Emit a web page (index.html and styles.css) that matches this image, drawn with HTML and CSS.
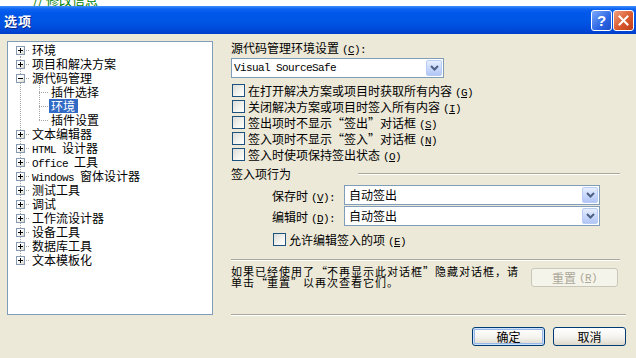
FILE: index.html
```html
<!DOCTYPE html>
<html lang="zh-CN">
<head>
<meta charset="utf-8">
<title>选项</title>
<link rel="stylesheet" href="styles.css">
</head>
<body>
<div class="topstrip"><span>// 修改信息</span></div>
<div class="titlebar">
  <span class="title">选项</span>
  <div class="tbtns">
    <span class="tbtn help">?</span>
    <span class="tbtn close"><svg width="11" height="11" viewBox="0 0 11 11"><path d="M1.5 1.5l8 8M9.5 1.5l-8 8" stroke="#fff" stroke-width="2" stroke-linecap="square"/></svg></span>
  </div>
</div>
<div class="dialog">
  <div class="main">
    <div class="tree">
      <div class="row"><span class="g g-first"><span class="pb"></span></span><span class="lbl">环境</span></div>
      <div class="row"><span class="g g-mid"><span class="pb"></span></span><span class="lbl">项目和解决方案</span></div>
      <div class="row"><span class="g g-mid"><span class="pb minus"></span></span><span class="lbl">源代码管理</span></div>
      <div class="row"><span class="g g-pass"></span><span class="g g-cmid"></span><span class="lbl">插件选择</span></div>
      <div class="row"><span class="g g-pass"></span><span class="g g-cmid"></span><span class="lbl sel">环境</span></div>
      <div class="row"><span class="g g-pass"></span><span class="g g-clast"></span><span class="lbl">插件设置</span></div>
      <div class="row"><span class="g g-mid"><span class="pb"></span></span><span class="lbl">文本编辑器</span></div>
      <div class="row"><span class="g g-mid"><span class="pb"></span></span><span class="lbl"><span class="m">HTML </span>设计器</span></div>
      <div class="row"><span class="g g-mid"><span class="pb"></span></span><span class="lbl"><span class="m">Office </span>工具</span></div>
      <div class="row"><span class="g g-mid"><span class="pb"></span></span><span class="lbl"><span class="m">Windows </span>窗体设计器</span></div>
      <div class="row"><span class="g g-mid"><span class="pb"></span></span><span class="lbl">测试工具</span></div>
      <div class="row"><span class="g g-mid"><span class="pb"></span></span><span class="lbl">调试</span></div>
      <div class="row"><span class="g g-mid"><span class="pb"></span></span><span class="lbl">工作流设计器</span></div>
      <div class="row"><span class="g g-mid"><span class="pb"></span></span><span class="lbl">设备工具</span></div>
      <div class="row"><span class="g g-mid"><span class="pb"></span></span><span class="lbl">数据库工具</span></div>
      <div class="row"><span class="g g-last"><span class="pb"></span></span><span class="lbl">文本模板化</span></div>
    </div>
    <div class="settings">
      <div class="lab1">源代码管理环境设置<span class="acc">(<u>C</u>):</span></div>
      <div class="combo wide"><span class="m">Visual SourceSafe</span><span class="arrow"><svg width="9" height="6" viewBox="0 0 9 6"><path d="M1 1l3.5 3.5L8 1" fill="none" stroke="#4D6185" stroke-width="2"/></svg></span></div>
      <div class="checks">
        <div class="chk"><span class="box"></span><span>在打开解决方案或项目时获取所有内容<span class="acc">(<u>G</u>)</span></span></div>
        <div class="chk"><span class="box"></span><span>关闭解决方案或项目时签入所有内容<span class="acc">(<u>I</u>)</span></span></div>
        <div class="chk"><span class="box"></span><span>签出项时不显示<span class="qo">“</span>签出<span class="qc">”</span>对话框<span class="acc">(<u>S</u>)</span></span></div>
        <div class="chk"><span class="box"></span><span>签入项时不显示<span class="qo">“</span>签入<span class="qc">”</span>对话框<span class="acc">(<u>N</u>)</span></span></div>
        <div class="chk"><span class="box"></span><span>签入时使项保持签出状态<span class="acc">(<u>O</u>)</span></span></div>
      </div>
      <div class="group"><span>签入项行为</span><span class="gline"></span></div>
      <div class="field first"><span class="flabel">保存时<span class="acc">(<u>V</u>):</span></span><div class="combo narrow"><span class="ctext">自动签出</span><span class="arrow"><svg width="9" height="6" viewBox="0 0 9 6"><path d="M1 1l3.5 3.5L8 1" fill="none" stroke="#4D6185" stroke-width="2"/></svg></span></div></div>
      <div class="field"><span class="flabel">编辑时<span class="acc">(<u>D</u>):</span></span><div class="combo narrow"><span class="ctext">自动签出</span><span class="arrow"><svg width="9" height="6" viewBox="0 0 9 6"><path d="M1 1l3.5 3.5L8 1" fill="none" stroke="#4D6185" stroke-width="2"/></svg></span></div></div>
      <div class="chk indent"><span class="box"></span><span>允许编辑签入的项<span class="acc">(<u>E</u>)</span></span></div>
      <div class="sep sep1"></div>
      <div class="info">
        <p class="infotext">如果已经使用了<span class="qo">“</span>不再显示此对话框<span class="qc">”</span>隐藏对话框，请<br>单击<span class="qo">“</span>重置<span class="qc">”</span>以再次查看它们。</p>
        <span class="btn reset">重置<span class="acc">(<u>R</u>)</span></span>
      </div>
      <div class="sep sep2"></div>
    </div>
  </div>
  <div class="footer">
    <span class="btn def">确定</span>
    <span class="btn">取消</span>
  </div>
</div>
</body>
</html>
```

FILE: styles.css
```css
* { box-sizing: border-box; }
html, body { margin: 0; padding: 0; }
body {
  width: 636px;
  height: 358px;
  overflow: hidden;
  background: #ECE9D8;
  font-family: "Noto Sans CJK SC", "Noto Sans", sans-serif;
  font-size: 12px;
  color: #000;
}
u { text-decoration: underline; }

.topstrip {
  height: 6px;
  background: #fff;
  overflow: hidden;
  padding-left: 33px;
}
.topstrip span {
  display: block;
  color: #008000;
  font-size: 13px;
  line-height: 13px;
  margin-top: -7px;
}

.titlebar {
  height: 28px;
  display: flex;
  align-items: center;
  justify-content: space-between;
  padding: 0 2px 0 4px;
  background: linear-gradient(to bottom, #3D8EF9 0, #0D63F2 3px, #0058EA 7px, #0055E4 16px, #004ADA 23px, #003FC9 28px);
}
.title {
  color: #fff;
  font-weight: bold;
  font-size: 13px;
  letter-spacing: 1px;
  text-shadow: 1px 1px 0 #0A2A8A;
}
.tbtns { display: flex; gap: 1px; }
.tbtn {
  width: 21px;
  height: 21px;
  border: 1px solid #fff;
  border-radius: 3px;
  display: flex;
  align-items: center;
  justify-content: center;
}
.help {
  background: linear-gradient(135deg, #7DAAFB, #2B66E4 60%, #1E50C8);
  color: #fff;
  font-family: "Liberation Sans", sans-serif;
  font-weight: bold;
  font-size: 15px;
}
.close {
  background: linear-gradient(135deg, #F0A07C, #D9582E 55%, #C0401C);
}

.dialog { padding: 7px 10px 0 7px; }
.main { display: flex; gap: 18px; }

.tree {
  width: 206px;
  height: 274px;
  flex: none;
  background: #fff;
  border: 1px solid #7F9DB9;
  padding: 1px 0 0 3px;
}
.row { display: flex; height: 14px; }
.g {
  width: 19px;
  height: 14px;
  flex: none;
  padding: 3px 0 0 5px;
}
.g-first {
  background:
    repeating-linear-gradient(to right, #A5A5A5 0 1px, transparent 1px 2px) 9px 7px / 10px 1px no-repeat,
    repeating-linear-gradient(to bottom, #A5A5A5 0 1px, transparent 1px 2px) 9px 7px / 1px 7px no-repeat;
}
.g-mid, .g-cmid {
  background:
    repeating-linear-gradient(to right, #A5A5A5 0 1px, transparent 1px 2px) 9px 7px / 10px 1px no-repeat,
    repeating-linear-gradient(to bottom, #A5A5A5 0 1px, transparent 1px 2px) 9px 0 / 1px 14px no-repeat;
}
.g-last, .g-clast {
  background:
    repeating-linear-gradient(to right, #A5A5A5 0 1px, transparent 1px 2px) 9px 7px / 10px 1px no-repeat,
    repeating-linear-gradient(to bottom, #A5A5A5 0 1px, transparent 1px 2px) 9px 0 / 1px 8px no-repeat;
}
.g-pass {
  background: repeating-linear-gradient(to bottom, #A5A5A5 0 1px, transparent 1px 2px) 9px 0 / 1px 14px no-repeat;
}
.pb {
  display: block;
  width: 9px;
  height: 9px;
  border: 1px solid #8799B0;
  background:
    linear-gradient(#000, #000) 1px 3px / 5px 1px no-repeat,
    linear-gradient(#000, #000) 3px 1px / 1px 5px no-repeat,
    linear-gradient(135deg, #fff 40%, #D8D8D0);
}
.pb.minus {
  background:
    linear-gradient(#000, #000) 1px 3px / 5px 1px no-repeat,
    linear-gradient(135deg, #fff 40%, #D8D8D0);
}
.lbl {
  padding: 0 2px;
  line-height: 14px;
  height: 14px;
  white-space: nowrap;
}
.lbl.sel {
  background: #316AC5;
  color: #fff;
  padding: 0 3px 0 2px;
}
.m, .acc {
  font-family: "Liberation Mono", "DejaVu Sans Mono", monospace;
  font-size: 11px;
  letter-spacing: -0.6px;
  white-space: pre;
}
.acc { margin-left: 3px; }
.qo, .qc {
  display: inline-block;
  width: 12px;
  letter-spacing: 0;
}
.qo { text-align: right; }
.qc { text-align: left; }

.settings { width: 395px; flex: none; }
.lab1 { height: 14px; line-height: 14px; white-space: nowrap; }
.combo {
  display: flex;
  align-items: center;
  justify-content: space-between;
  height: 20px;
  background: #fff;
  border: 1px solid #7F9DB9;
  padding-left: 2px;
}
.combo.wide { width: 213px; margin-top: 3px; }
.combo.narrow { width: 256px; }
.ctext { padding-left: 2px; line-height: 14px; }
.arrow {
  width: 16px;
  height: 16px;
  margin-right: 1px;
  border: 1px solid #B8CCF5;
  border-radius: 2px;
  background: linear-gradient(#E6EEFE, #C6D6FA 60%, #B2C6F4);
  display: flex;
  align-items: center;
  justify-content: center;
}

.checks { margin-top: 4px; }
.chk {
  display: flex;
  align-items: center;
  height: 16px;
  gap: 3px;
  white-space: nowrap;
}
.box {
  width: 13px;
  height: 13px;
  flex: none;
  margin-left: 1px;
  border: 1px solid #1C5180;
  background: linear-gradient(135deg, #DCDCD7, #F4F4F0 60%, #fff);
}
.chk.indent { padding-left: 41px; margin-top: 5px; }

.group {
  display: flex;
  align-items: center;
  justify-content: space-between;
  height: 14px;
  margin-top: 4px;
}
.gline {
  width: 262px;
  flex: none;
  margin: 1px 6px 0 0;
  height: 2px;
  border-top: 1px solid #ACA899;
  border-bottom: 1px solid #fff;
}
.field {
  display: flex;
  align-items: center;
  padding-left: 41px;
  margin-top: 1px;
}
.field.first { margin-top: 5px; }
.flabel { width: 72px; white-space: nowrap; }

.sep {
  height: 2px;
  border-top: 1px solid #ACA899;
  border-bottom: 1px solid #fff;
}
.sep1 { margin: 12px 6px 0 0; }
.sep2 { margin: 26px 0 0 0; }

.info {
  display: flex;
  justify-content: space-between;
  align-items: flex-start;
  margin-top: 5px;
  padding-right: 8px;
}
.infotext {
  margin: 0;
  font-size: 11px;
  letter-spacing: 1px;
  line-height: 11px;
  white-space: nowrap;
}

.btn {
  display: flex;
  align-items: center;
  justify-content: center;
  width: 73px;
  height: 19px;
  border: 1px solid #003C74;
  border-radius: 3px;
  background: linear-gradient(#FFFFFF, #F4F3EE 55%, #DDD8CB);
  line-height: 14px;
}
.btn.def {
  box-shadow: inset 0 0 0 1px #CEE1FC, inset 0 0 0 2px #98B8EA;
}
.btn.reset {
  width: 87px;
  margin-top: 2px;
  border-color: #C9C7BA;
  background: #F5F4EA;
  color: #ACA899;
}

.footer {
  display: flex;
  justify-content: flex-end;
  gap: 8px;
  margin-top: 11px;
}
```
